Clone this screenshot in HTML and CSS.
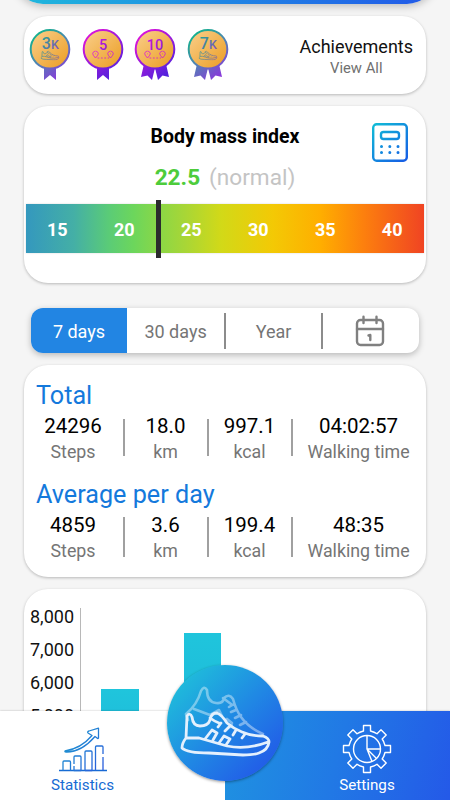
FILE: index.html
```
<!DOCTYPE html>
<html lang="en">
<head>
    <meta charset="UTF-8">
    <meta name="viewport" content="width=device-width, initial-scale=1.0">
    <title>Step Counter</title>
    <link rel="stylesheet" href="styles.css">
</head>
<body>
    <!-- shared gradients and symbols -->
    <svg class="defs" width="0" height="0">
        <defs>
            <linearGradient id="gold" x1="0" y1="0" x2="1" y2="1">
                <stop offset="0" stop-color="#fad08e"/>
                <stop offset="1" stop-color="#eb9c20"/>
            </linearGradient>
            <linearGradient id="teal" gradientUnits="userSpaceOnUse" x1="5" y1="5" x2="38" y2="46">
                <stop offset="0" stop-color="#0fb58c"/>
                <stop offset="0.5" stop-color="#5283b4"/>
                <stop offset="1" stop-color="#8b35dc"/>
            </linearGradient>
            <linearGradient id="teal-text" gradientUnits="userSpaceOnUse" x1="12" y1="10" x2="31" y2="21">
                <stop offset="0" stop-color="#1ba592"/>
                <stop offset="1" stop-color="#8b4cc4"/>
            </linearGradient>
            <linearGradient id="teal-shoe" gradientUnits="userSpaceOnUse" x1="0" y1="0" x2="92" y2="46">
                <stop offset="0" stop-color="#3a9a94"/>
                <stop offset="1" stop-color="#8a62a0"/>
            </linearGradient>
            <linearGradient id="purple" gradientUnits="userSpaceOnUse" x1="4" y1="8" x2="38" y2="46">
                <stop offset="0" stop-color="#da14da"/>
                <stop offset="1" stop-color="#4b22dd"/>
            </linearGradient>
            <linearGradient id="blue" gradientUnits="userSpaceOnUse" x1="0" y1="0" x2="37" y2="40">
                <stop offset="0" stop-color="#10bfd6"/>
                <stop offset="1" stop-color="#1656e6"/>
            </linearGradient>
            <linearGradient id="stats" gradientUnits="userSpaceOnUse" x1="0" y1="0" x2="48" y2="40">
                <stop offset="0" stop-color="#1aa6cc"/>
                <stop offset="1" stop-color="#2a58dd"/>
            </linearGradient>
            <symbol id="shoe" viewBox="0 0 92 48">
                <path d="M8 6 Q11 2 13 7 Q14 16 21 16 Q29 16 31 10 Q32 3 38 3 Q43 5 48 13 Q55 19 63 22 Q72 26 84 26 Q90 28 90 32 Q89 40 80 43 Q75 45 64 45 L30 43 Q8 43 3 38 Q3 33 7 28 Z M7 28 L20 28 Q34 32 48 36 Q68 40 89 32 M26 29 L33 20 L38 23 L34 30 M40 33 L45 26 L51 29 L47 35 M31 8 Q35 11 40 13 M42 13 L39 17 M50 17 L46 21 M57 20 L54 25 M66 24 L63 28"/>
            </symbol>
            <symbol id="route" viewBox="0 0 22 9">
                <path d="M3.500 7.500 L1.300 4.800 A2.700 2.700 0 1 1 5.700 4.800 Z M18.500 7.500 L16.300 4.800 A2.700 2.700 0 1 1 20.700 4.800 Z"/>
                <path d="M3.200 3.300 h0.600 M18.200 3.300 h0.600 M5.500 7.500 H17" stroke-dasharray="1.800 1.600"/>
            </symbol>
        </defs>
    </svg>

    <header class="top-bar"></header>

    <main class="content">
        <section class="card achievements">
            <div class="badges">
                <svg class="badge teal" viewBox="0 0 42 54">
                    <path class="ribbon" d="M15 36 H27 V52 L21 47 L15 52 Z"/>
                    <circle class="coin" cx="21" cy="21.300" r="19.300"/>
                    <text class="badge-text" x="21.300" y="21.300">3<tspan font-size="12.5">K</tspan></text>
                    <use class="shoe-icon" href="#shoe" x="11.500" y="22.500" width="19" height="10"/>
                </svg>
                <svg class="badge purple" viewBox="0 0 42 54">
                    <path class="ribbon" d="M15 36 H27 V52 L21 47 L15 52 Z"/>
                    <circle class="coin" cx="21" cy="21.300" r="19.300"/>
                    <text class="badge-text small" x="21" y="22">5</text>
                    <use class="badge-icon" href="#route" x="10" y="22.500" width="22" height="9"/>
                </svg>
                <svg class="badge purple" viewBox="0 0 42 54">
                    <path class="ribbon" d="M10 36 L21 40 L18 52 L13.500 47.500 L7 49 Z M32 36 L21 40 L24 52 L28.500 47.500 L35 49 Z"/>
                    <circle class="coin" cx="21" cy="21.300" r="19.300"/>
                    <text class="badge-text small" x="21" y="22">10</text>
                    <use class="badge-icon" href="#route" x="10" y="22.500" width="22" height="9"/>
                </svg>
                <svg class="badge teal" viewBox="0 0 42 54">
                    <path class="ribbon" d="M10 36 L21 40 L18 52 L13.500 47.500 L7 49 Z M32 36 L21 40 L24 52 L28.500 47.500 L35 49 Z"/>
                    <circle class="coin" cx="21" cy="21.300" r="19.300"/>
                    <text class="badge-text" x="21.300" y="21.300">7<tspan font-size="12.5">K</tspan></text>
                    <use class="shoe-icon" href="#shoe" x="11.500" y="22.500" width="19" height="10"/>
                </svg>
            </div>
            <div class="achievements-link">
                <div class="achievements-title">Achievements</div>
                <div class="view-all">View All</div>
            </div>
        </section>

        <section class="card bmi">
            <svg class="calculator" viewBox="0 0 36 39" fill="none" stroke="url(#blue)">
                <rect x="1.200" y="1.200" width="33.600" height="36.600" rx="3.500" stroke-width="2.400"/>
                <rect x="9" y="9" width="18" height="7" rx="2.500" stroke-width="2.400"/>
                <path d="M9.500 23.500 h0.010 M17.800 23.500 h0.010 M26 23.500 h0.010 M9.500 29.500 h0.010 M17.800 29.500 h0.010 M26 29.500 h0.010" stroke-width="3" stroke-linecap="round"/>
            </svg>
            <h2 class="bmi-title">Body mass index</h2>
            <div class="bmi-result"><span class="bmi-value">22.5</span><span class="bmi-label">(normal)</span></div>
            <div class="scale">
                <span>15</span><span>20</span><span>25</span><span>30</span><span>35</span><span>40</span>
                <div class="marker"></div>
            </div>
        </section>

        <nav class="tabs">
            <div class="tab active"><span>7 days</span></div>
            <div class="tab"><span>30 days</span></div>
            <div class="tab divided"><span>Year</span></div>
            <div class="tab divided">
                <svg class="calendar" viewBox="0 0 30 32" fill="none" stroke="#808080" stroke-width="2.400" stroke-linecap="round" stroke-linejoin="round">
                    <rect x="2" y="5" width="26" height="25" rx="3.500"/>
                    <path d="M2 14 H28 M8.500 1.800 V8 M21.500 1.800 V8 M13.500 20.500 L15.300 20 V25"/>
                </svg>
            </div>
        </nav>

        <section class="card totals">
            <h3 class="totals-title">Total</h3>
            <div class="stats">
                <div class="stat"><b>24296</b><span>Steps</span></div>
                <div class="stat"><b>18.0</b><span>km</span></div>
                <div class="stat"><b>997.1</b><span>kcal</span></div>
                <div class="stat"><b>04:02:57</b><span>Walking time</span></div>
            </div>
            <h3 class="totals-title">Average per day</h3>
            <div class="stats average">
                <div class="stat"><b>4859</b><span>Steps</span></div>
                <div class="stat"><b>3.6</b><span>km</span></div>
                <div class="stat"><b>199.4</b><span>kcal</span></div>
                <div class="stat"><b>48:35</b><span>Walking time</span></div>
            </div>
        </section>

        <section class="card chart">
            <div class="y-axis">
                <span>8,000</span>
                <span>7,000</span>
                <span>6,000</span>
                <span>5,000</span>
            </div>
            <div class="bars">
                <div class="bar" style="height: 111px"></div>
                <div class="bar" style="height: 167px"></div>
            </div>
        </section>
    </main>

    <footer class="bottom-nav">
        <a class="nav-item statistics">
            <svg class="stats-icon" viewBox="0 0 48 46" fill="none" stroke="url(#stats)" stroke-width="1.300" stroke-linejoin="round">
                <path d="M0 43.500 H48" stroke="#176bd3"/>
                <path d="M4 43.500 V35 Q4 34 5 34 H10.500 Q11.500 34 11.500 35 V43.500 M15 37 V30 Q15 29 16 29 H21 Q22 29 22 30 V43.500 H15 V39 M26 43.500 V25 Q26 24 27 24 H32 Q33 24 33 25 V43.500 H26 M36.500 43.500 V20 Q36.500 19 37.500 19 H43 Q44 19 44 20 V27 M44 30 V43.500"/>
                <path d="M6 24 Q22 21.500 33 8.500 L29 6 Q28 4.500 30 4 L39.500 1.200 V11 Q39 12 38 11 L36 9.500 Q22 25.500 7 25 Q5.500 25 6 24 Z"/>
            </svg>
            <span>Statistics</span>
        </a>
        <a class="nav-item settings">
            <svg class="gear" viewBox="-25 -25 50 50" fill="none" stroke="#fff" stroke-width="1.400" stroke-linejoin="round">
                <path d="M-3.500 -18 V-23.500 H3.500 V-18 Q7.500 -17 10 -15.200 L14 -19.200 L19.200 -14 L15.200 -10 Q17 -7.500 18 -3.500 H23.500 V3.500 H18 Q17 7.500 15.200 10 L19.200 14 L14 19.200 L10 15.200 Q7.500 17 3.500 18 V23.500 H-3.500 V18 Q-7.500 17 -10 15.200 L-14 19.200 L-19.200 14 L-15.200 10 Q-17 7.500 -18 3.500 H-23.500 V-3.500 H-18 Q-17 -7.500 -15.200 -10 L-19.200 -14 L-14 -19.200 L-10 -15.200 Q-7.500 -17 -3.500 -18 Z"/>
                <circle r="13.500"/>
                <path d="M0 -13.500 V0 H13.500 M0 0 L9.500 9.500 M0 0 L5 12.500"/>
            </svg>
            <span>Settings</span>
        </a>
        <div class="walk-button">
            <svg viewBox="0 0 116 116" fill="none" stroke="#fff" stroke-linecap="round" stroke-linejoin="round">
                <path opacity="0.4" stroke-width="2.600" d="M19 49 Q30 40 34 26 Q37 20 40 25 Q40 37 49 38 Q56 39 57 33 Q62 28 66 34 Q69 45 74 52 Q82 63 96 69 M19 49 L21 55 M27 44 L43 50 L52 45 L55 51 M56 33 L64 39 M62 42 L67 39 M64 47 L69 45 M68 53 L74 50 M73 60 L79 57 M60 54 L65 58 L64 62"/>
                <use href="#shoe" x="12" y="45" width="92" height="48" stroke="#e4f0fd" stroke-width="2.800"/>
            </svg>
        </div>
    </footer>
</body>
</html>
```

FILE: styles.css
```
* {
    box-sizing: border-box;
}
body {
    margin: 0;
    width: 450px;
    height: 800px;
    overflow: hidden;
    position: relative;
    background: #f5f5f5;
    font-family: Roboto, Arial, sans-serif;
}
.defs {
    position: absolute;
}
.top-bar {
    height: 4px;
    position: relative;
}
.top-bar::before {
    content: "";
    position: absolute;
    left: 15px;
    right: 15px;
    bottom: 0;
    height: 60px;
    border-radius: 0 0 28px 28px;
    background: linear-gradient(90deg, #1fb9dc, #2086e4 50%, #2259e8);
    box-shadow: 0 2px 8px rgba(0, 0, 0, 0.25);
}
.content {
    padding: 12px 24px 0;
}
.card {
    background: #fff;
    border-radius: 24px;
    box-shadow: 0 1px 3px rgba(0, 0, 0, 0.25);
    margin-bottom: 12px;
}

/* Achievements */
.achievements {
    height: 78px;
    display: flex;
    justify-content: space-between;
    padding: 12px 13px 0 5px;
}
.badges {
    display: flex;
    gap: 10.7px;
}
.badge {
    width: 42px;
    height: 54px;
}
.coin {
    fill: url(#gold);
    stroke-width: 2;
}
.teal .ribbon {
    fill: url(#teal);
}
.teal .badge-text {
    fill: url(#teal-text);
}
.purple .ribbon, .purple .badge-text {
    fill: url(#purple);
}
.teal .coin {
    stroke: url(#teal);
}
.purple .coin, .purple .badge-icon {
    stroke: url(#purple);
}
.badge-text {
    font-size: 16px;
    font-weight: 500;
    text-anchor: middle;
}
.badge-text.small {
    font-size: 14.5px;
}
.badge-icon {
    fill: none;
    stroke-width: 0.8;
}
.shoe-icon {
    fill: none;
    stroke: url(#teal-shoe);
    stroke-width: 3.4;
}
.achievements-link {
    text-align: center;
    padding-top: 7px;
}
.achievements-title {
    font-size: 18px;
    line-height: 23px;
    color: #111;
}
.view-all {
    font-size: 14.8px;
    line-height: 21px;
    color: #707070;
}

/* Body mass index */
.bmi {
    height: 177px;
    padding: 17px 2px 0;
    text-align: center;
    position: relative;
    margin-bottom: 25px;
}
.calculator {
    position: absolute;
    top: 17px;
    right: 18px;
    width: 36px;
    height: 39px;
}
.bmi-title {
    margin: 0;
    font-size: 19.5px;
    line-height: 28px;
    font-weight: 700;
    color: #000;
}
.bmi-result {
    margin-top: 11px;
    font-size: 22.6px;
    line-height: 31px;
}
.bmi-value {
    color: #4dcc3b;
    font-weight: 700;
    margin-right: 9px;
}
.bmi-label {
    color: #c4c4c4;
}
.scale {
    display: flex;
    justify-content: space-between;
    padding: 0 21.5px 0 21px;
    margin-top: 11px;
    height: 49px;
    line-height: 51px;
    position: relative;
    background: linear-gradient(90deg, #3498be 0%, #44afa6 12%, #5bcc76 21%, #6cd65c 27%, #8dd745 34%, #a8d636 40%, #d2d918 49%, #f3c905 62%, #ffae00 74%, #fc7f0e 85%, #f04423 100%);
    box-shadow: 0 0 2px rgba(0, 0, 0, 0.15);
    color: #fff;
    font-size: 18px;
    font-weight: 700;
}
.marker {
    position: absolute;
    left: 130px;
    top: -4px;
    width: 5px;
    height: 58px;
    background: #2b2b2d;
}

/* Period tabs */
.tabs {
    display: flex;
    height: 45px;
    margin: 0 7.5px 12px 7px;
    border-radius: 12px;
    overflow: hidden;
    background: #fff;
    box-shadow: 0 2px 6px rgba(0, 0, 0, 0.25);
}
.tab {
    flex: 1;
    display: flex;
    align-items: center;
    justify-content: center;
    color: #757575;
    font-size: 18px;
    padding-top: 1px;
}
.tab.active {
    flex: 0 0 96px;
    background: #2285e3;
    color: #fff;
}
.tab.divided::before {
    content: "";
    width: 1.5px;
    height: 36px;
    background: #8c8c8c;
    margin-right: auto;
}
.tab.divided::after {
    content: "";
    margin-left: auto;
}
.calendar {
    width: 30px;
    height: 32px;
    margin-right: 2px;
}

/* Totals */
.totals {
    height: 212px;
    padding: 14px 12px 0;
}
.totals-title {
    margin: 0;
    font-size: 25.2px;
    line-height: 34px;
    font-weight: 400;
    color: #1479dc;
}
.stats {
    display: grid;
    grid-template-columns: 87px 84px 84px 134px;
    height: 64.5px;
}
.stat {
    position: relative;
    display: flex;
    flex-direction: column;
    align-items: center;
    padding-left: 1px;
}
.stat:first-child {
    padding: 0 13px 0 0;
}
.stat + .stat::before {
    content: "";
    position: absolute;
    left: 0;
    top: 6px;
    width: 1.5px;
    height: 37px;
    background: #a0a0a0;
}
.average .stat + .stat::before {
    top: 5px;
    height: 40px;
}
.stat b {
    font-size: 20.5px;
    line-height: 26px;
    font-weight: 400;
    color: #000;
}
.stat span {
    font-size: 17.8px;
    line-height: 26px;
    color: #757575;
}

/* Chart */
.chart {
    height: 211px;
    display: flex;
    padding-top: 11px;
    margin-bottom: 0;
}
.y-axis {
    width: 50px;
    text-align: right;
    font-size: 18px;
    line-height: 33px;
    color: #111;
}
.y-axis span {
    display: block;
}
.bars {
    height: 192px;
    margin: 8px 0 0 6px;
    border-left: 1px solid #b8b8b8;
    padding-left: 20px;
    display: flex;
    align-items: flex-end;
    gap: 45px;
}
.bar {
    width: 37.5px;
    background: linear-gradient(#1fc5dc, #1fadd8);
}

/* Bottom navigation */
.bottom-nav {
    position: absolute;
    left: 0;
    right: 0;
    bottom: 0;
    height: 89px;
    display: flex;
    box-shadow: 0 0 2px rgba(0, 0, 0, 0.25);
}
.nav-item {
    width: 50%;
    display: flex;
    flex-direction: column;
    align-items: center;
    font-size: 15.2px;
    line-height: 20px;
}
.statistics {
    background: #fff;
    color: #176bd3;
    padding: 16px 60px 0 0;
}
.settings {
    background: linear-gradient(105deg, #1f94e0, #2179e5 50%, #2459e8);
    color: #fff;
    padding: 13px 0 0 59px;
}
.stats-icon {
    width: 48px;
    height: 46px;
    margin-bottom: 2px;
}
.gear {
    width: 50px;
    height: 50px;
    margin-bottom: 1px;
}
.walk-button {
    position: absolute;
    left: 167px;
    top: -46px;
    width: 116px;
    height: 116px;
    border-radius: 50%;
    background: linear-gradient(135deg, #1fbcdb 12%, #2086e4 53%, #2259e8 90%);
    box-shadow: 0 1px 3px rgba(0, 0, 0, 0.4);
}
```
